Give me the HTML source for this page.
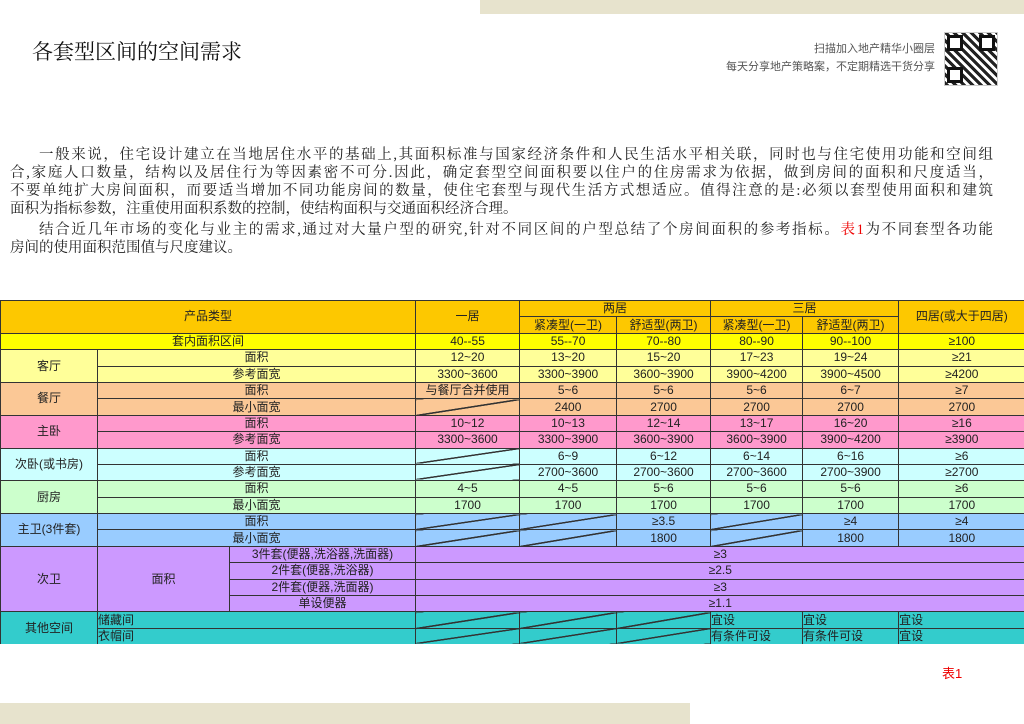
<!DOCTYPE html>
<html><head><meta charset="utf-8"><style>
body{margin:0;width:1024px;height:724px;background:#fff;position:relative;overflow:hidden;font-family:"Liberation Serif","Noto Serif CJK SC",serif;}
.abs{position:absolute}
.ln{position:absolute;left:10px;width:983px;font-size:14.5px;line-height:18px;white-space:nowrap;color:#222;text-align:justify;text-align-last:justify}
table{position:absolute;left:0;top:300px;width:1024px;border-collapse:collapse;table-layout:fixed;font-family:"Liberation Sans","WenQuanYi Zen Hei",sans-serif;font-size:12px;color:#222}
td{padding:0;text-align:center;height:15.4px;line-height:15px;border-left:1px solid #333;border-top:1px solid #333;overflow:hidden;white-space:nowrap}
.h td{background-color:#fdc800}
.y td{background-color:#ffff00}
.k td{background-color:#ffff99}
.c td{background-color:#fbc896}
.z td{background-color:#ff99cc}
.x td{background-color:#ccffff}
.f td{background-color:#ccffcc}
.w td{background-color:#99ccff}
.v td{background-color:#cc99ff}
.o td{background-color:#33cccc}
td.dg{background-image:linear-gradient(to bottom right,transparent 47%,#333 48%,#333 52%,transparent 53%)}
.l{text-align:left}
</style></head><body>
<div class="abs" style="left:480px;top:0;width:544px;height:14px;background:#e7e3cd"></div>
<div class="abs" style="left:0;top:703px;width:690px;height:21px;background:#e7e3cd"></div>
<div class="abs" style="left:32px;top:36px;font-size:21px;color:#111">各套型区间的空间需求</div>
<div class="abs" style="left:700px;top:40px;width:235px;text-align:right;font-family:'Liberation Sans','WenQuanYi Zen Hei',sans-serif;font-size:11px;color:#555;line-height:18px">扫描加入地产精华小圈层<br>每天分享地产策略案，不定期精选干货分享</div>
<div class="abs" style="left:944px;top:32px;width:52px;height:52px;background:repeating-linear-gradient(45deg,#222 0 3px,#fff 3px 6px),#fff;border:1px solid #ccc">
<div class="abs" style="left:2px;top:2px;width:10px;height:10px;border:3px solid #111;background:#fff"></div>
<div class="abs" style="right:2px;top:2px;width:10px;height:10px;border:3px solid #111;background:#fff"></div>
<div class="abs" style="left:2px;bottom:2px;width:10px;height:10px;border:3px solid #111;background:#fff"></div></div>
<div class="ln" style="top:146px;text-indent:2em">一般来说，住宅设计建立在当地居住水平的基础上,其面积标准与国家经济条件和人民生活水平相关联，同时也与住宅使用功能和空间组</div>
<div class="ln" style="top:164px">合,家庭人口数量，结构以及居住行为等因素密不可分.因此，确定套型空间面积要以住户的住房需求为依据，做到房间的面积和尺度适当，</div>
<div class="ln" style="top:182px">不要单纯扩大房间面积，而要适当增加不同功能房间的数量，使住宅套型与现代生活方式想适应。值得注意的是:必须以套型使用面积和建筑</div>
<div class="ln" style="top:200px;text-align-last:left">面积为指标参数，注重使用面积系数的控制，使结构面积与交通面积经济合理。</div>
<div class="ln" style="top:221px;text-indent:2em">结合近几年市场的变化与业主的需求,通过对大量户型的研究,针对不同区间的户型总结了个房间面积的参考指标。<span style="color:#e00">表1</span>为不同套型各功能</div>
<div class="ln" style="top:239px;text-align-last:left">房间的使用面积范围值与尺度建议。</div>
<table>
<colgroup><col style="width:97px"><col style="width:132px"><col style="width:186px"><col style="width:104px"><col style="width:97px"><col style="width:94px"><col style="width:92px"><col style="width:96px"><col style="width:126px"></colgroup>
<tr class="h"><td colspan="3" rowspan="2" style="height:31px">产品类型</td><td rowspan="2">一居</td><td colspan="2">两居</td><td colspan="2">三居</td><td rowspan="2">四居(或大于四居)</td></tr>
<tr class="h"><td>紧凑型(一卫)</td><td>舒适型(两卫)</td><td>紧凑型(一卫)</td><td>舒适型(两卫)</td></tr>
<tr class="y"><td colspan="3">套内面积区间</td><td>40--55</td><td>55--70</td><td>70--80</td><td>80--90</td><td>90--100</td><td>≥100</td></tr>
<tr class="k"><td rowspan="2">客厅</td><td colspan="2">面积</td><td>12~20</td><td>13~20</td><td>15~20</td><td>17~23</td><td>19~24</td><td>≥21</td></tr>
<tr class="k"><td colspan="2">参考面宽</td><td>3300~3600</td><td>3300~3900</td><td>3600~3900</td><td>3900~4200</td><td>3900~4500</td><td>≥4200</td></tr>
<tr class="c"><td rowspan="2">餐厅</td><td colspan="2">面积</td><td>与餐厅合并使用</td><td>5~6</td><td>5~6</td><td>5~6</td><td>6~7</td><td>≥7</td></tr>
<tr class="c"><td colspan="2">最小面宽</td><td class="dg"></td><td>2400</td><td>2700</td><td>2700</td><td>2700</td><td>2700</td></tr>
<tr class="z"><td rowspan="2">主卧</td><td colspan="2">面积</td><td>10~12</td><td>10~13</td><td>12~14</td><td>13~17</td><td>16~20</td><td>≥16</td></tr>
<tr class="z"><td colspan="2">参考面宽</td><td>3300~3600</td><td>3300~3900</td><td>3600~3900</td><td>3600~3900</td><td>3900~4200</td><td>≥3900</td></tr>
<tr class="x"><td rowspan="2">次卧(或书房)</td><td colspan="2">面积</td><td class="dg"></td><td>6~9</td><td>6~12</td><td>6~14</td><td>6~16</td><td>≥6</td></tr>
<tr class="x"><td colspan="2">参考面宽</td><td class="dg"></td><td>2700~3600</td><td>2700~3600</td><td>2700~3600</td><td>2700~3900</td><td>≥2700</td></tr>
<tr class="f"><td rowspan="2">厨房</td><td colspan="2">面积</td><td>4~5</td><td>4~5</td><td>5~6</td><td>5~6</td><td>5~6</td><td>≥6</td></tr>
<tr class="f"><td colspan="2">最小面宽</td><td>1700</td><td>1700</td><td>1700</td><td>1700</td><td>1700</td><td>1700</td></tr>
<tr class="w"><td rowspan="2">主卫(3件套)</td><td colspan="2">面积</td><td class="dg"></td><td class="dg"></td><td>≥3.5</td><td class="dg"></td><td>≥4</td><td>≥4</td></tr>
<tr class="w"><td colspan="2">最小面宽</td><td class="dg"></td><td class="dg"></td><td>1800</td><td class="dg"></td><td>1800</td><td>1800</td></tr>
<tr class="v"><td rowspan="4">次卫</td><td rowspan="4">面积</td><td>3件套(便器,洗浴器,洗面器)</td><td colspan="6">≥3</td></tr>
<tr class="v"><td>2件套(便器,洗浴器)</td><td colspan="6">≥2.5</td></tr>
<tr class="v"><td>2件套(便器,洗面器)</td><td colspan="6">≥3</td></tr>
<tr class="v"><td>单设便器</td><td colspan="6">≥1.1</td></tr>
<tr class="o"><td rowspan="2">其他空间</td><td colspan="2" class="l">储藏间</td><td class="dg"></td><td class="dg"></td><td class="dg"></td><td class="l">宜设</td><td class="l">宜设</td><td class="l">宜设</td></tr>
<tr class="o"><td colspan="2" class="l">衣帽间</td><td class="dg"></td><td class="dg"></td><td class="dg"></td><td class="l">有条件可设</td><td class="l">有条件可设</td><td class="l">宜设</td></tr>
</table>
<div class="abs" style="left:942px;top:663px;font-family:'Liberation Sans','WenQuanYi Zen Hei',sans-serif;font-size:13px;color:#e00">表1</div>
</body></html>
